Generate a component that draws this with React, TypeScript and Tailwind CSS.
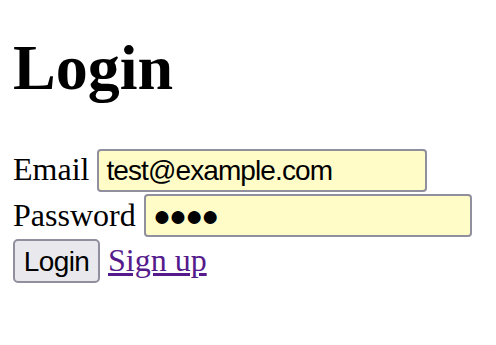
import React from "react";

export default function App() {
  return (
    <div className="min-h-[345px] bg-white pl-[13px] pt-[31px] text-[32px] text-black font-['Liberation_Serif',serif]">
      <h1 className="m-0 mb-[44px] text-[64px] font-bold leading-[73.5px]">Login</h1>
      <form onSubmit={(e) => e.preventDefault()}>
        <div className="flex h-[45px] items-baseline gap-[8px]">
          <label htmlFor="email" className="leading-[37px]">Email</label>
          <input
            id="email"
            type="email"
            defaultValue="test@example.com"
            className="box-border h-[43px] w-[330px] rounded-[4px] border-2 border-[#8f8f9d] bg-[#fffcc8] px-[7px] pt-[1px] text-[28px] tracking-[-0.9px] text-black outline-none font-['Liberation_Sans',Arial,sans-serif]"
          />
        </div>
        <div className="flex h-[45px] items-baseline gap-[8px]">
          <label htmlFor="password" className="leading-[37px]">Password</label>
          <input
            id="password"
            type="text"
            readOnly
            defaultValue="●●●●"
            className="box-border h-[43px] w-[328px] rounded-[4px] border-2 border-[#8f8f9d] bg-[#fffcc8] px-[7px] text-[30px] tracking-[-2px] text-black outline-none font-['Liberation_Sans',Arial,sans-serif]"
          />
        </div>
        <div className="flex h-[45px] items-baseline gap-[8px]">
          <button
            type="submit"
            className="box-border h-[44px] w-[87px] rounded-[5px] border-2 border-[#8f8f9d] bg-[#e9e9ed] px-0 text-[28px] tracking-[-0.6px] leading-normal text-black font-['Liberation_Sans',Arial,sans-serif]"
          >
            Login
          </button>
          <a href="#" className="leading-[37px] text-[#551a8b] underline">Sign up</a>
        </div>
      </form>
    </div>
  );
}
